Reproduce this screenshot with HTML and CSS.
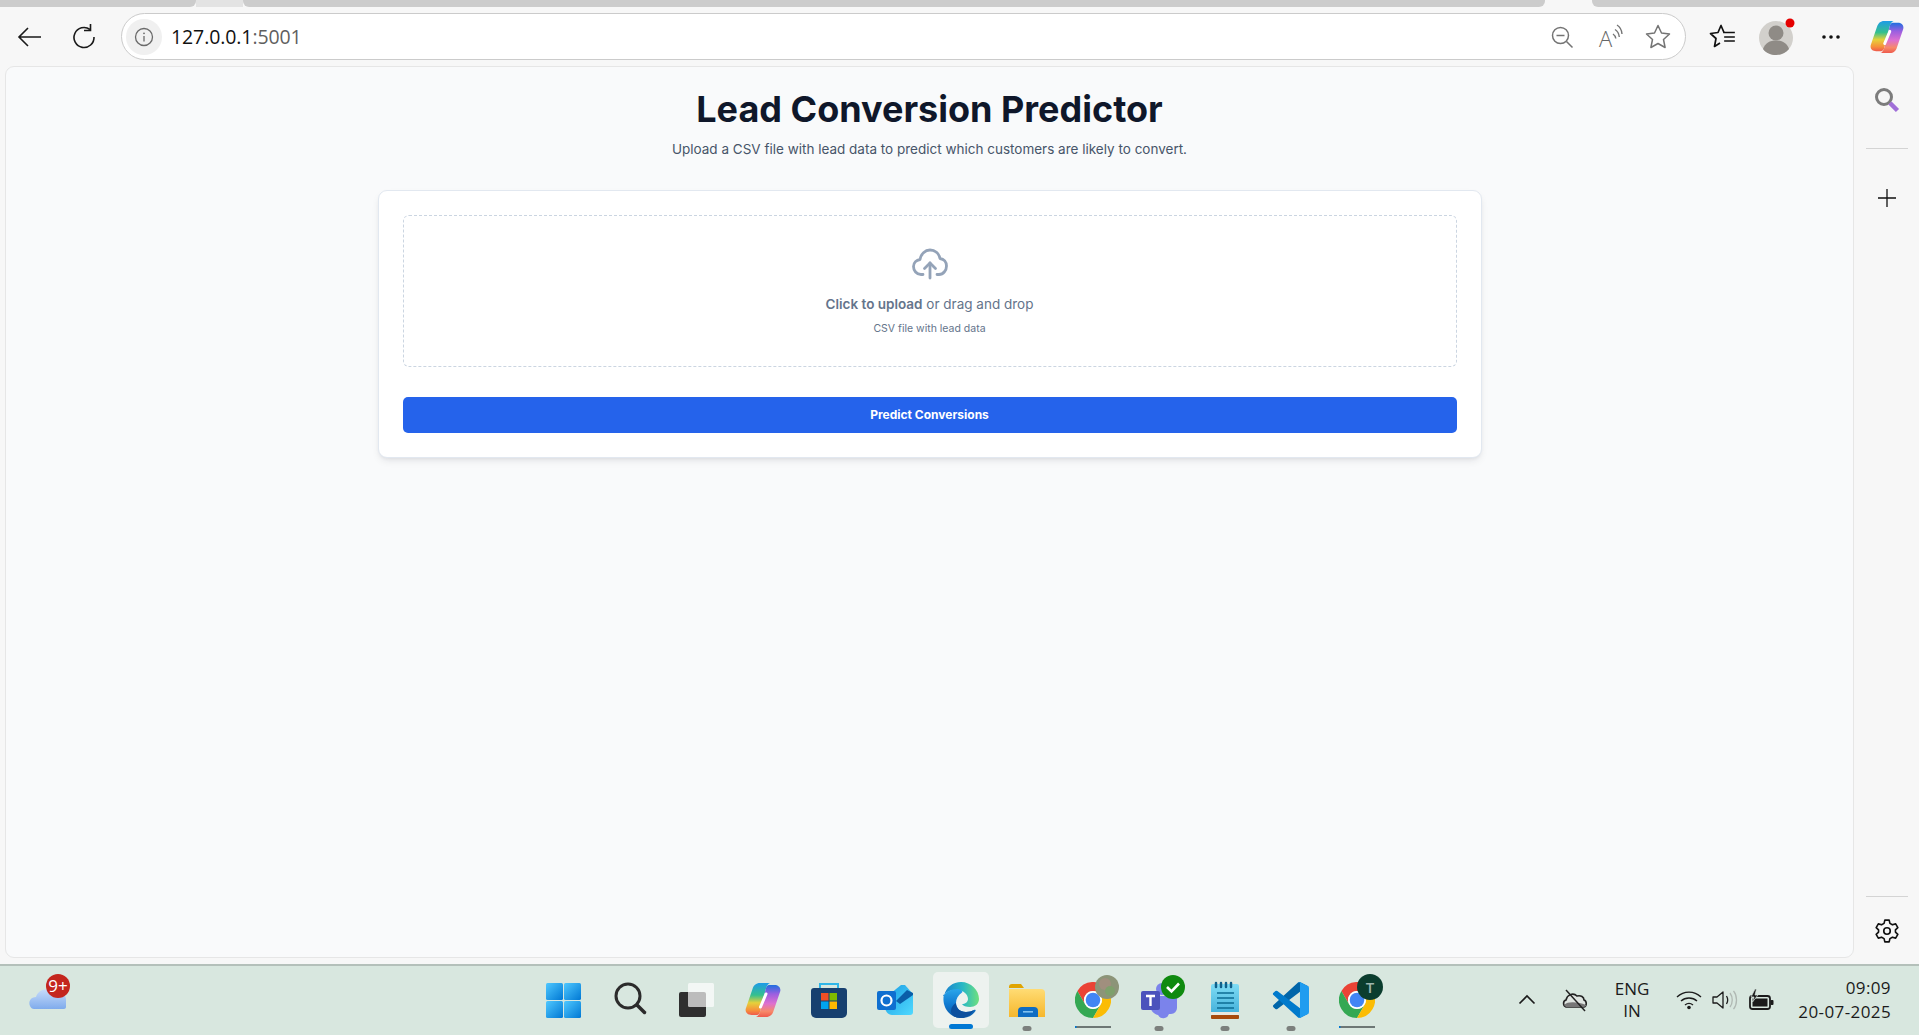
FILE: index.html
```html
<!DOCTYPE html>
<html lang="en">
<head>
<meta charset="utf-8">
<title>Lead Conversion Predictor</title>
<link rel="stylesheet" href="styles.css">
</head>
<body>
<svg class="sprite" aria-hidden="true">
  <defs>
    <linearGradient id="gStart" x1="0" y1="0" x2="1" y2="1"><stop offset="0" stop-color="#4fc8ff"/><stop offset="1" stop-color="#0078d4"/></linearGradient>
    <linearGradient id="gCopA" x1="0" y1="0" x2="0" y2="1"><stop offset="0" stop-color="#1d9be8"/><stop offset=".38" stop-color="#35c08e"/><stop offset=".62" stop-color="#e6d13a"/><stop offset=".85" stop-color="#f7913a"/><stop offset="1" stop-color="#ef5a4c"/></linearGradient>
    <linearGradient id="gCopB" x1="0" y1="0" x2="0" y2="1"><stop offset="0" stop-color="#1f6fe0"/><stop offset=".28" stop-color="#9a5fe0"/><stop offset=".58" stop-color="#dd70d0"/><stop offset=".82" stop-color="#f78a6a"/><stop offset="1" stop-color="#ef5a4c"/></linearGradient>
    <linearGradient id="gEdgeTop" x1="0" y1="0" x2="1" y2="0"><stop offset="0" stop-color="#1a7fd0"/><stop offset=".55" stop-color="#28b8c4"/><stop offset="1" stop-color="#6fe07e"/></linearGradient>
    <linearGradient id="gEdgeBody" x1="0" y1="0" x2="0" y2="1"><stop offset="0" stop-color="#2aa6ea"/><stop offset=".55" stop-color="#0f78d0"/><stop offset="1" stop-color="#0c59a4"/></linearGradient>
    <linearGradient id="gFolder" x1="0" y1="0" x2="0" y2="1"><stop offset="0" stop-color="#ffdc74"/><stop offset="1" stop-color="#f6b72c"/></linearGradient>
    <linearGradient id="gOut" x1="0" y1="0" x2="1" y2="1"><stop offset="0" stop-color="#1b9de2"/><stop offset="1" stop-color="#50d9ff"/></linearGradient>
    <linearGradient id="gNote" x1="0" y1="0" x2="0" y2="1"><stop offset="0" stop-color="#7fdcf5"/><stop offset="1" stop-color="#3aa9d6"/></linearGradient>
    <linearGradient id="gCloud" x1="0" y1="0" x2="0" y2="1"><stop offset="0" stop-color="#c7dcfa"/><stop offset="1" stop-color="#7fabec"/></linearGradient>
    <symbol id="copilot" viewBox="0 0 36 36">
      <path fill="url(#gCopA)" d="M25 1H15C11 1 8.500 3.500 7.500 7L1 26C-.5 30 2.500 33 6.500 33H12C13.500 33 14.500 31.500 15 30L20.500 8C21.500 4 23 1.500 25 1Z"/>
      <path fill="url(#gCopB)" d="M11 35H21C25 35 27.500 32.500 28.500 29L35 10C36.500 6 33.500 3 29.500 3H24C22.500 3 21.500 4.500 21 6L15.500 28C14.500 32 13 34.500 11 35Z"/>
      <path d="M21 12 15.500 25" stroke="#fff" stroke-width="3" stroke-linecap="round"/>
    </symbol>
    <symbol id="chrome" viewBox="0 0 36 36">
      <path fill="#ea4335" d="M2.400 9A18 18 0 0 1 33.600 9H18A9 9 0 0 0 10.200 22.500Z"/>
      <path fill="#34a853" d="M2.400 9A18 18 0 0 0 18 36L25.800 22.500A9 9 0 0 1 10.200 22.500Z"/>
      <path fill="#fbbc04" d="M33.600 9A18 18 0 0 1 18 36L25.800 22.500A9 9 0 0 0 18 9Z"/>
      <circle cx="18" cy="18" r="9" fill="#fff"/>
      <circle cx="18" cy="18" r="7.300" fill="#4285f4"/>
    </symbol>
  </defs>
</svg>

<div class="tabstrip">
  <div class="tab-seg tab-a"></div>
  <div class="tab-gap tab-gap-dim"></div>
  <div class="tab-seg tab-b"></div>
  <div class="tab-gap"></div>
  <div class="tab-seg tab-c"></div>
</div>

<header class="toolbar">
  <button class="tool tool-nav" aria-label="Back">
    <svg width="26" height="24" viewBox="0 0 26 24" fill="none" stroke="#1a1a1a" stroke-width="1.600"><path d="M24 12H2M11 3l-9 9 9 9"/></svg>
  </button>
  <button class="tool tool-nav" aria-label="Refresh">
    <svg width="26" height="26" viewBox="0 0 26 26" fill="none" stroke="#1a1a1a" stroke-width="1.600"><path d="M19 5.500A10 10 0 1 0 23 13"/><path d="M19.500 0v6.500H13"/></svg>
  </button>
  <div class="address">
    <span class="site-info">
      <svg width="20" height="20" viewBox="0 0 20 20" fill="none"><circle cx="10" cy="10" r="8.500" stroke="#6a6a6a" stroke-width="1.300"/><path d="M10 9v5.500" stroke="#6a6a6a" stroke-width="1.300"/><circle cx="10" cy="6.300" r=".9" fill="#6a6a6a"/></svg>
    </span>
    <span class="url">127.0.0.1<span class="url-port">:5001</span></span>
    <span class="addr-actions">
      <span class="addr-icon">
        <svg width="24" height="24" viewBox="0 0 24 24" fill="none" stroke="#747474" stroke-width="1.500"><circle cx="10.500" cy="10.500" r="8"/><path d="M6.500 10.500h8M16.500 16.500l6 6"/></svg>
      </span>
      <span class="addr-icon">
        <svg width="28" height="40" viewBox="0 -7 28 40" fill="none" stroke="#747474" stroke-width="1.400"><text class="read-a" x="3" y="23">A</text><path d="M17 10c1.500 1 2.500 2.500 2.800 4.500M19 5.500c2.500 1.500 4 4.500 4.300 7.500M21 1c3 1.800 4.700 5 5 9"/></svg>
      </span>
      <span class="addr-icon">
        <svg width="26" height="25" viewBox="0 0 26 25" fill="none" stroke="#747474" stroke-width="1.500" stroke-linejoin="round"><path d="M13 1.500l3.500 7.500 8 1-6 5.500 1.600 8L13 19.500 5.900 23.500l1.600-8-6-5.500 8-1Z"/></svg>
      </span>
    </span>
  </div>
  <button class="tool" aria-label="Favorites">
    <svg width="26" height="25" viewBox="0 0 26 25" fill="none" stroke="#111" stroke-width="1.700" stroke-linejoin="round"><path d="M15 8.500 12 1.500 9 8.500 1.500 9.500l5.500 5L5.500 22.500 11 19"/><path d="M15 8.500h2M16 13h9M16 17h9M16 8.500h9" stroke-linecap="square"/></svg>
  </button>
  <button class="tool" aria-label="Profile">
    <svg width="38" height="38" viewBox="0 0 38 38"><circle cx="18" cy="20" r="17" fill="#d2d0cc"/><circle cx="18" cy="15" r="7.500" fill="#8f8b86"/><path d="M5 31c2-6 7-8.500 13-8.500S29 25 31 31c-3 4-8 6-13 6S8 35 5 31Z" fill="#8f8b86"/><circle cx="32" cy="5" r="4.500" fill="#e50000"/></svg>
  </button>
  <button class="tool tool-dots" aria-label="Settings and more">
    <svg width="20" height="6" viewBox="0 0 20 6" fill="#111"><circle cx="3" cy="3" r="1.800"/><circle cx="10" cy="3" r="1.800"/><circle cx="17" cy="3" r="1.800"/></svg>
  </button>
  <button class="tool" aria-label="Copilot">
    <svg width="34" height="34"><use href="#copilot"/></svg>
  </button>
</header>

<div class="middle">
  <main class="panel">
    <h1 class="title">Lead Conversion Predictor</h1>
    <p class="subtitle">Upload a CSV file with lead data to predict which customers are likely to convert.</p>
    <section class="card">
      <div class="dropzone">
        <svg class="upload-icon" width="36" height="32" viewBox="0 0 36 32" fill="none" stroke="#94a3b8" stroke-width="2.800" stroke-linecap="round" stroke-linejoin="round"><path d="M11 26.500H9C4.500 26.500 1.500 22.500 1.500 18.500 1.500 14.500 4.500 12 8 11.500 9 6 13 2 18 2c5 0 9 3.500 10 8.500 4 .5 6.500 3.500 6.500 7.500 0 4-3 8.500-7.500 8.500H25"/><path d="M18 30V15"/><path d="M12.500 20.500 18 15l5.500 5.500"/></svg>
        <p class="drop-main"><strong class="drop-strong">Click to upload</strong> or drag and drop</p>
        <p class="drop-sub">CSV file with lead data</p>
      </div>
      <button class="predict">Predict Conversions</button>
    </section>
  </main>
  <aside class="sidebar">
    <button class="side-btn side-search" aria-label="Search">
      <svg width="26" height="26" viewBox="0 0 26 26" fill="none"><circle cx="10" cy="10" r="7.500" stroke="#7c7c7c" stroke-width="3"/><path d="M16 16l7.500 7.500" stroke="#a06fd8" stroke-width="4.500"/></svg>
    </button>
    <div class="side-rule side-rule-top"></div>
    <button class="side-btn side-plus" aria-label="Add">
      <svg width="20" height="20" viewBox="0 0 20 20" stroke="#111" stroke-width="1.300"><path d="M10 1v18M1 10h18"/></svg>
    </button>
    <div class="side-fill"></div>
    <div class="side-rule"></div>
    <button class="side-btn side-gear" aria-label="Settings">
      <svg width="26" height="26" viewBox="0 0 24 24" fill="none" stroke="#111" stroke-width="1.500" stroke-linejoin="round"><path d="M10 2h4l.7 3 2.300 1.300 3-.9 2 3.500-2.200 2.100v2l2.200 2.100-2 3.500-3-.9L14.700 19 14 22h-4l-.7-3-2.300-1.300-3 .9-2-3.500L4.200 13v-2L2 8.900l2-3.500 3 .9L9.300 5Z"/><circle cx="12" cy="12" r="3"/></svg>
    </button>
  </aside>
</div>

<footer class="taskbar">
  <div class="task-left">
    <svg width="66" height="71" viewBox="0 0 66 71">
      <path fill="url(#gCloud)" d="M4 42c-2-5 1-9 6-9 2-7 10-10 16-6 3-1 7 0 9 3 3 0 5 2 5 6v7c0 1-1 2-2 2H8c-2 0-3-1-4-3Z"/>
      <circle cx="32" cy="22" r="12" fill="#c4261d"/>
      <text class="badge-text" x="32" y="28" text-anchor="middle">9+</text>
    </svg>
  </div>
  <div class="task-center">
    <svg class="task-item" viewBox="0 0 66 71" role="img" aria-label="Start">
      <rect x="14" y="19" width="17" height="17" rx="1.500" fill="url(#gStart)"/><rect x="32" y="19" width="17" height="17" rx="1.500" fill="url(#gStart)"/><rect x="14" y="37" width="17" height="17" rx="1.500" fill="url(#gStart)"/><rect x="32" y="37" width="17" height="17" rx="1.500" fill="url(#gStart)"/>
    </svg>
    <svg class="task-item" viewBox="0 0 66 71" role="img" aria-label="Search">
      <circle cx="30" cy="32" r="12" fill="none" stroke="#2b2b2b" stroke-width="3"/><path d="M39 41l7.500 7.500" stroke="#2b2b2b" stroke-width="3.500" stroke-linecap="round"/>
    </svg>
    <svg class="task-item" viewBox="0 0 66 71" role="img" aria-label="Task view">
      <rect x="15" y="28" width="27" height="25" rx="2" fill="#2f2f2f"/><rect x="24" y="19" width="26" height="24" rx="1.500" fill="#fff" fill-opacity=".68"/>
    </svg>
    <svg class="task-item" viewBox="0 0 66 71" role="img" aria-label="Copilot"><use href="#copilot" x="15" y="18" width="36" height="36"/></svg>
    <svg class="task-item" viewBox="0 0 66 71" role="img" aria-label="Store">
      <path d="M24 25v-5h18v5" fill="none" stroke="#2fb6e8" stroke-width="2"/><path d="M15 27a3 3 0 0 1 3-3h30a3 3 0 0 1 3 3v22a5 5 0 0 1-5 5H20a5 5 0 0 1-5-5Z" fill="#17406f"/><rect x="25" y="29" width="7.500" height="7.500" fill="#ef4f25"/><rect x="33.500" y="29" width="7.500" height="7.500" fill="#7fba00"/><rect x="25" y="37.500" width="7.500" height="7.500" fill="#00a4ef"/><rect x="33.500" y="37.500" width="7.500" height="7.500" fill="#ffb900"/>
    </svg>
    <svg class="task-item" viewBox="0 0 66 71" role="img" aria-label="Outlook">
      <path d="M23 34 39 21h4l8 9v18a3 3 0 0 1-3 3H30c-4 0-7-4-7-8Z" fill="url(#gOut)"/><path d="M34 37l11-11 6 3v2L38 40Z" fill="#0a5ea8"/><rect x="15" y="27" width="19" height="19" rx="2" fill="#0f6fd0"/><circle cx="24.500" cy="36.500" r="5" fill="none" stroke="#fff" stroke-width="2.200"/>
    </svg>
    <svg class="task-item" viewBox="0 0 66 71" role="img" aria-label="Edge">
      <rect class="task-active" x="5" y="8" width="56" height="56" rx="5"/>
      <g transform="translate(15 18)">
        <path fill="url(#gEdgeTop)" d="M1 14C3 5 10 0 18 0c10 0 18 8 18 17 0 5-4 8-9 8-4 0-7-1-8-3 3 0 6-2 6-5 0-5-5-9-11-9-6 0-12 2-14 6Z"/>
        <path fill="url(#gEdgeBody)" d="M15 7C8 7 1 10 .5 15-.5 27 8 36 18 36c6 0 11-2 14.500-7 .5-1-.5-1.500-1.500-1-2 1.200-5 2-8 2-6 0-10-4-10-9 0-4 2-8 6-10.500 1-.7 0-3-4-3.500Z"/>
        <path fill="#0b4f9e" d="M13 21c0 5 4 9 10 9 3 0 6-.8 8-2-3 5-8 8-14 8-4 0-8-2-9-6 0-5 2-7 5-9Z"/>
      </g>
      <rect x="21" y="60" width="24" height="5" rx="2.500" fill="#0078d4"/>
    </svg>
    <svg class="task-item" viewBox="0 0 66 71" role="img" aria-label="File Explorer">
      <path d="M15 23a3 3 0 0 1 3-3h9l3 4h-15Z" fill="#e0a400"/><path d="M15 25h32a4 4 0 0 1 4 4v24H15Z" fill="url(#gFolder)"/><path d="M24 53v-6a4 4 0 0 1 4-4h12a4 4 0 0 1 4 4v6Z" fill="#0f6cc2"/><rect x="29" y="47" width="10" height="1.600" fill="#7fc0f0"/>
      <rect x="28.500" y="62" width="9" height="5" rx="2.500" fill="#7c807d"/>
    </svg>
    <svg class="task-item" viewBox="0 0 66 71" role="img" aria-label="Chrome profile">
      <use href="#chrome" x="15" y="18" width="36" height="36"/>
      <circle cx="47" cy="23" r="12" fill="#8c9478"/><circle cx="45" cy="20" r="6" fill="#a08f7e"/><circle cx="50" cy="27" r="5" fill="#7ea06c"/>
      <rect x="15" y="62" width="36" height="2" fill="#6d7775"/><rect x="15" y="62" width="1.500" height="2" fill="#0078d4"/>
    </svg>
    <svg class="task-item" viewBox="0 0 66 71" role="img" aria-label="Teams">
      <circle cx="36" cy="25" r="6" fill="#7b83eb"/><circle cx="46" cy="27" r="4.500" fill="#7b83eb"/><path d="M24 32h27v12a6 6 0 0 1-6 6h-2a6 6 0 0 1-11 1c-5-1-8-6-8-10Z" fill="#7b83eb"/><rect x="15" y="27" width="19" height="19" rx="2" fill="#4b53bc"/><path d="M20 32h9M24.500 32v10" stroke="#fff" stroke-width="2.400" fill="none"/>
      <circle cx="47" cy="23" r="12" fill="#0f8a0f"/><path d="M41 23l4.500 4.500 7.500-8" stroke="#fff" stroke-width="2.600" fill="none"/>
      <rect x="28.500" y="62" width="9" height="5" rx="2.500" fill="#7c807d"/>
    </svg>
    <svg class="task-item" viewBox="0 0 66 71" role="img" aria-label="Notepad">
      <rect x="19" y="20" width="28" height="34" rx="2" fill="url(#gNote)"/><rect x="19" y="48" width="28" height="3" fill="#e8e8e0"/><rect x="19" y="51" width="28" height="4" rx="1" fill="#a84a0c"/>
      <path d="M24 19v4M29 19v4M34 19v4M39 19v4" stroke="#12608a" stroke-width="2.500" stroke-linecap="round"/><path d="M25 29h17M25 34h17M25 39h17M25 44h17" stroke="#0c6c94" stroke-width="1.700"/>
      <rect x="28.500" y="62" width="9" height="5" rx="2.500" fill="#7c807d"/>
    </svg>
    <svg class="task-item" viewBox="0 0 66 71" role="img" aria-label="VS Code">
      <g transform="translate(15 18) scale(.36)">
        <path fill="#0065a9" d="M96.460 10.800 75.860.87a6.200 6.200 0 0 0-7.100 1.200L1.300 63.600a4.200 4.200 0 0 0 0 6.200l5.500 5a4.200 4.200 0 0 0 5.300.2l81.200-61.600c2.700-2 6.600-.1 6.600 3.300v-.2a6.200 6.200 0 0 0-3.500-5.600Z"/>
        <path fill="#007acc" d="M96.460 89.200 75.860 99.130a6.200 6.200 0 0 1-7.100-1.200L1.300 36.400a4.200 4.200 0 0 1 0-6.200l5.500-5a4.200 4.200 0 0 1 5.300-.2l81.200 61.600c2.700 2 6.600.1 6.600-3.300v.2a6.200 6.200 0 0 1-3.500 5.600Z"/>
        <path fill="#1f9cf0" d="M75.860 99.130a6.200 6.200 0 0 1-7.100-1.200c2.300 2.300 6.200.7 6.200-2.600V4.700c0-3.300-3.900-4.900-6.200-2.600a6.200 6.200 0 0 1 7.100-1.200l20.600 9.900a6.200 6.200 0 0 1 3.540 5.600v67.200a6.200 6.200 0 0 1-3.540 5.600Z"/>
      </g>
      <rect x="28.500" y="62" width="9" height="5" rx="2.500" fill="#7c807d"/>
    </svg>
    <svg class="task-item" viewBox="0 0 66 71" role="img" aria-label="Chrome profile T">
      <use href="#chrome" x="15" y="18" width="36" height="36"/>
      <circle cx="46" cy="23" r="13" fill="#0b3d2e"/><text class="badge-t" x="46" y="28.500" text-anchor="middle">T</text>
      <rect x="15" y="62" width="36" height="2" fill="#6d7775"/><rect x="15" y="62" width="1.500" height="2" fill="#0078d4"/>
    </svg>
  </div>
  <div class="task-right">
    <span class="tray tray-chevron">
      <svg width="18" height="11" viewBox="0 0 18 11" fill="none" stroke="#1b1b1b" stroke-width="1.700"><path d="M1.500 9.500 9 2l7.500 7.500"/></svg>
    </span>
    <span class="tray tray-cloud">
      <svg width="26" height="24" viewBox="0 0 26 24"><path d="M4 19c-3-1-3.500-6 0-7 1-5 7-8 11-4 4-1 7 1 7 4 3 1 3 6 0 7Z" fill="#dfe5e1" stroke="#222" stroke-width="1.600"/><path d="M2 17c4-4 14-3 22 0v1l-2 1H4Z" fill="#777"/><path d="M4 2l19 21" stroke="#222" stroke-width="1.500"/></svg>
    </span>
    <span class="tray tray-lang">ENG<br>IN</span>
    <span class="tray tray-wifi">
      <svg width="26" height="20" viewBox="0 0 26 20" fill="none" stroke="#1b1b1b" stroke-width="1.400"><path d="M1 7c7-6.500 17-6.500 24 0M5 11c4.500-4 11.500-4 16 0M9 15c2.500-2 5.500-2 8 0"/><circle cx="13" cy="17.500" r="1.800" fill="#1b1b1b" stroke="none"/></svg>
    </span>
    <span class="tray tray-sound">
      <svg width="26" height="20" viewBox="0 0 26 20" fill="none" stroke="#1b1b1b" stroke-width="1.300" stroke-linejoin="round"><path d="M1 7h4l6-5v16l-6-5H1Z"/><path d="M14.500 6c1.500 2.500 1.500 5.500 0 8"/><path d="M18 3c3 4 3 10 0 14M21.500.8c4 5 4 13.400 0 18.400" stroke="#b0b8b3"/></svg>
    </span>
    <span class="tray tray-batt">
      <svg width="26" height="22" viewBox="0 0 26 22"><rect x="2" y="7" width="20" height="13" rx="2.500" fill="none" stroke="#1b1b1b" stroke-width="1.800"/><rect x="4.500" y="9.500" width="15" height="8" fill="#1b1b1b"/><rect x="22.500" y="11" width="3" height="5" rx="1" fill="#1b1b1b"/><path d="M7 0 3 8h3l-1.500 5L10 6H7l1.500-6Z" fill="#1b1b1b" stroke="#d8e7df" stroke-width=".7"/></svg>
    </span>
    <span class="tray tray-clock">09:09<br>20-07-2025</span>
  </div>
</footer>
</body>
</html>
```
FILE: styles.css
```css
* { box-sizing: border-box; }
html, body { height: 100%; }
body {
  margin: 0;
  height: 100vh;
  overflow: hidden;
  display: flex;
  flex-direction: column;
  background: #f7f7f7;
  font-family: "Open Sans", "Noto Sans", sans-serif;
}
button { border: 0; background: none; padding: 0; font: inherit; }
p, h1 { margin: 0; }
.sprite { display: block; width: 0; height: 0; }

.tabstrip { flex: 0 0 7px; display: flex; background: #f7f7f7; }
.tab-seg { background: #cccccc; }
.tab-a { width: 196px; border-radius: 0 0 6px 0; }
.tab-b { width: 1302px; border-radius: 0 0 6px 6px; }
.tab-c { flex: 1; border-radius: 0 0 0 6px; }
.tab-gap { width: 47px; }
.tab-gap-dim { background: #e3e3e3; }

.toolbar {
  flex: 0 0 59px;
  display: flex;
  align-items: flex-start;
  padding: 6px 5px 0 3px;
  background: #f7f7f7;
}
.tool {
  flex: 0 0 55px;
  height: 47px;
  display: flex;
  align-items: center;
  justify-content: center;
}
.tool-nav { flex-basis: 54px; }
.tool-dots { padding-right: 2px; }
.address {
  flex: 1;
  height: 47px;
  margin: 0 8px 0 10px;
  display: flex;
  align-items: center;
  padding-left: 4px;
  background: #fff;
  border: 1.500px solid #cbcbcb;
  border-radius: 24px;
}
.site-info {
  flex: 0 0 36px;
  height: 36px;
  display: flex;
  align-items: center;
  justify-content: center;
  background: #f0f0f0;
  border-radius: 50%;
}
.url { margin-left: 9px; font-size: 19.5px; color: #111; letter-spacing: -0.1px; }
.url-port { color: #5f5f5f; }
.addr-actions { margin-left: auto; display: flex; padding-right: 3px; }
.addr-icon { width: 48px; height: 40px; display: flex; justify-content: center; align-items: center; }
.read-a { font-family: "Open Sans", sans-serif; font-size: 22px; font-weight: 300; fill: #666; stroke: none; }

.middle { flex: 1; display: flex; min-height: 0; }
.panel {
  flex: 1;
  margin: 0 0 6px 5px;
  display: flex;
  flex-direction: column;
  align-items: center;
  background: #f9fafb;
  border: 1px solid #e6e6e6;
  border-radius: 9px;
  font-family: Inter, "Liberation Sans", sans-serif;
}
.title {
  margin-top: 20px;
  font-size: 36px;
  line-height: 44px;
  font-weight: 700;
  color: #0f172a;
}
.subtitle {
  margin-top: 8px;
  font-size: 13.5px;
  line-height: 20px;
  color: #475569;
}
.card {
  width: 1104px;
  margin-top: 31px;
  padding: 24px;
  background: #fff;
  border: 1px solid #e2e8f0;
  border-radius: 9px;
  box-shadow: 0 4px 8px -2px rgba(15, 23, 42, .1), 0 2px 4px -2px rgba(15, 23, 42, .08);
}
.dropzone {
  height: 152px;
  display: flex;
  flex-direction: column;
  align-items: center;
  padding-top: 32px;
  border: 1px dashed #cbd5e1;
  border-radius: 6px;
}
.upload-icon { display: block; }
.drop-main { margin-top: 14px; font-size: 13.5px; line-height: 20px; color: #64748b; }
.drop-strong { font-weight: 600; }
.drop-sub { margin-top: 7px; font-size: 10.5px; line-height: 16px; color: #64748b; }
.predict {
  display: block;
  width: 100%;
  height: 36px;
  margin-top: 30px;
  padding-bottom: 2px;
  background: #2563eb;
  color: #fff;
  border-radius: 5px;
  font-family: Inter, "Liberation Sans", sans-serif;
  font-size: 12px;
  font-weight: 700;
}

.sidebar { flex: 0 0 65px; display: flex; flex-direction: column; align-items: center; }
.side-btn { height: 50px; width: 50px; display: flex; align-items: center; justify-content: center; }
.side-search { margin-top: 9px; }
.side-rule { flex: 0 0 1px; width: 42px; background: #d4d4d4; }
.side-rule-top { margin-top: 23px; }
.side-plus { margin-top: 24px; }
.side-fill { flex: 1; }
.side-gear { margin: 9px 0 8px; }

.taskbar {
  flex: 0 0 71px;
  display: grid;
  grid-template-columns: 1fr auto 1fr;
  background: #d8e7df;
  border-top: 2px solid #b4c0ba;
}
.task-left { padding-left: 26px; margin-top: -2px; }
.task-left svg { display: block; }
.badge-text { font-family: "Open Sans", sans-serif; font-size: 17px; fill: #fff; }
.badge-t { font-family: "Open Sans", sans-serif; font-size: 15px; font-weight: 600; fill: #9fb5ae; }
.task-center { display: flex; margin: -2px 0 0 3px; }
.task-item { display: block; width: 66px; height: 71px; }
.task-active { fill: #edf2ef; }
.task-right {
  display: flex;
  align-items: center;
  justify-content: flex-end;
  padding-right: 28px;
  margin-top: -2px;
  font-size: 17px;
  color: #1b1b1b;
}
.tray { display: flex; align-items: center; justify-content: center; }
.tray-chevron, .tray-cloud { flex: 0 0 48px; }
.tray-lang { flex: 0 0 66px; display: block; text-align: center; line-height: 22px; margin-right: 6px; }
.tray-wifi, .tray-sound, .tray-batt { flex: 0 0 36px; }
.tray-clock { flex: 0 0 112px; display: block; text-align: right; line-height: 24px; letter-spacing: .4px; }
```
